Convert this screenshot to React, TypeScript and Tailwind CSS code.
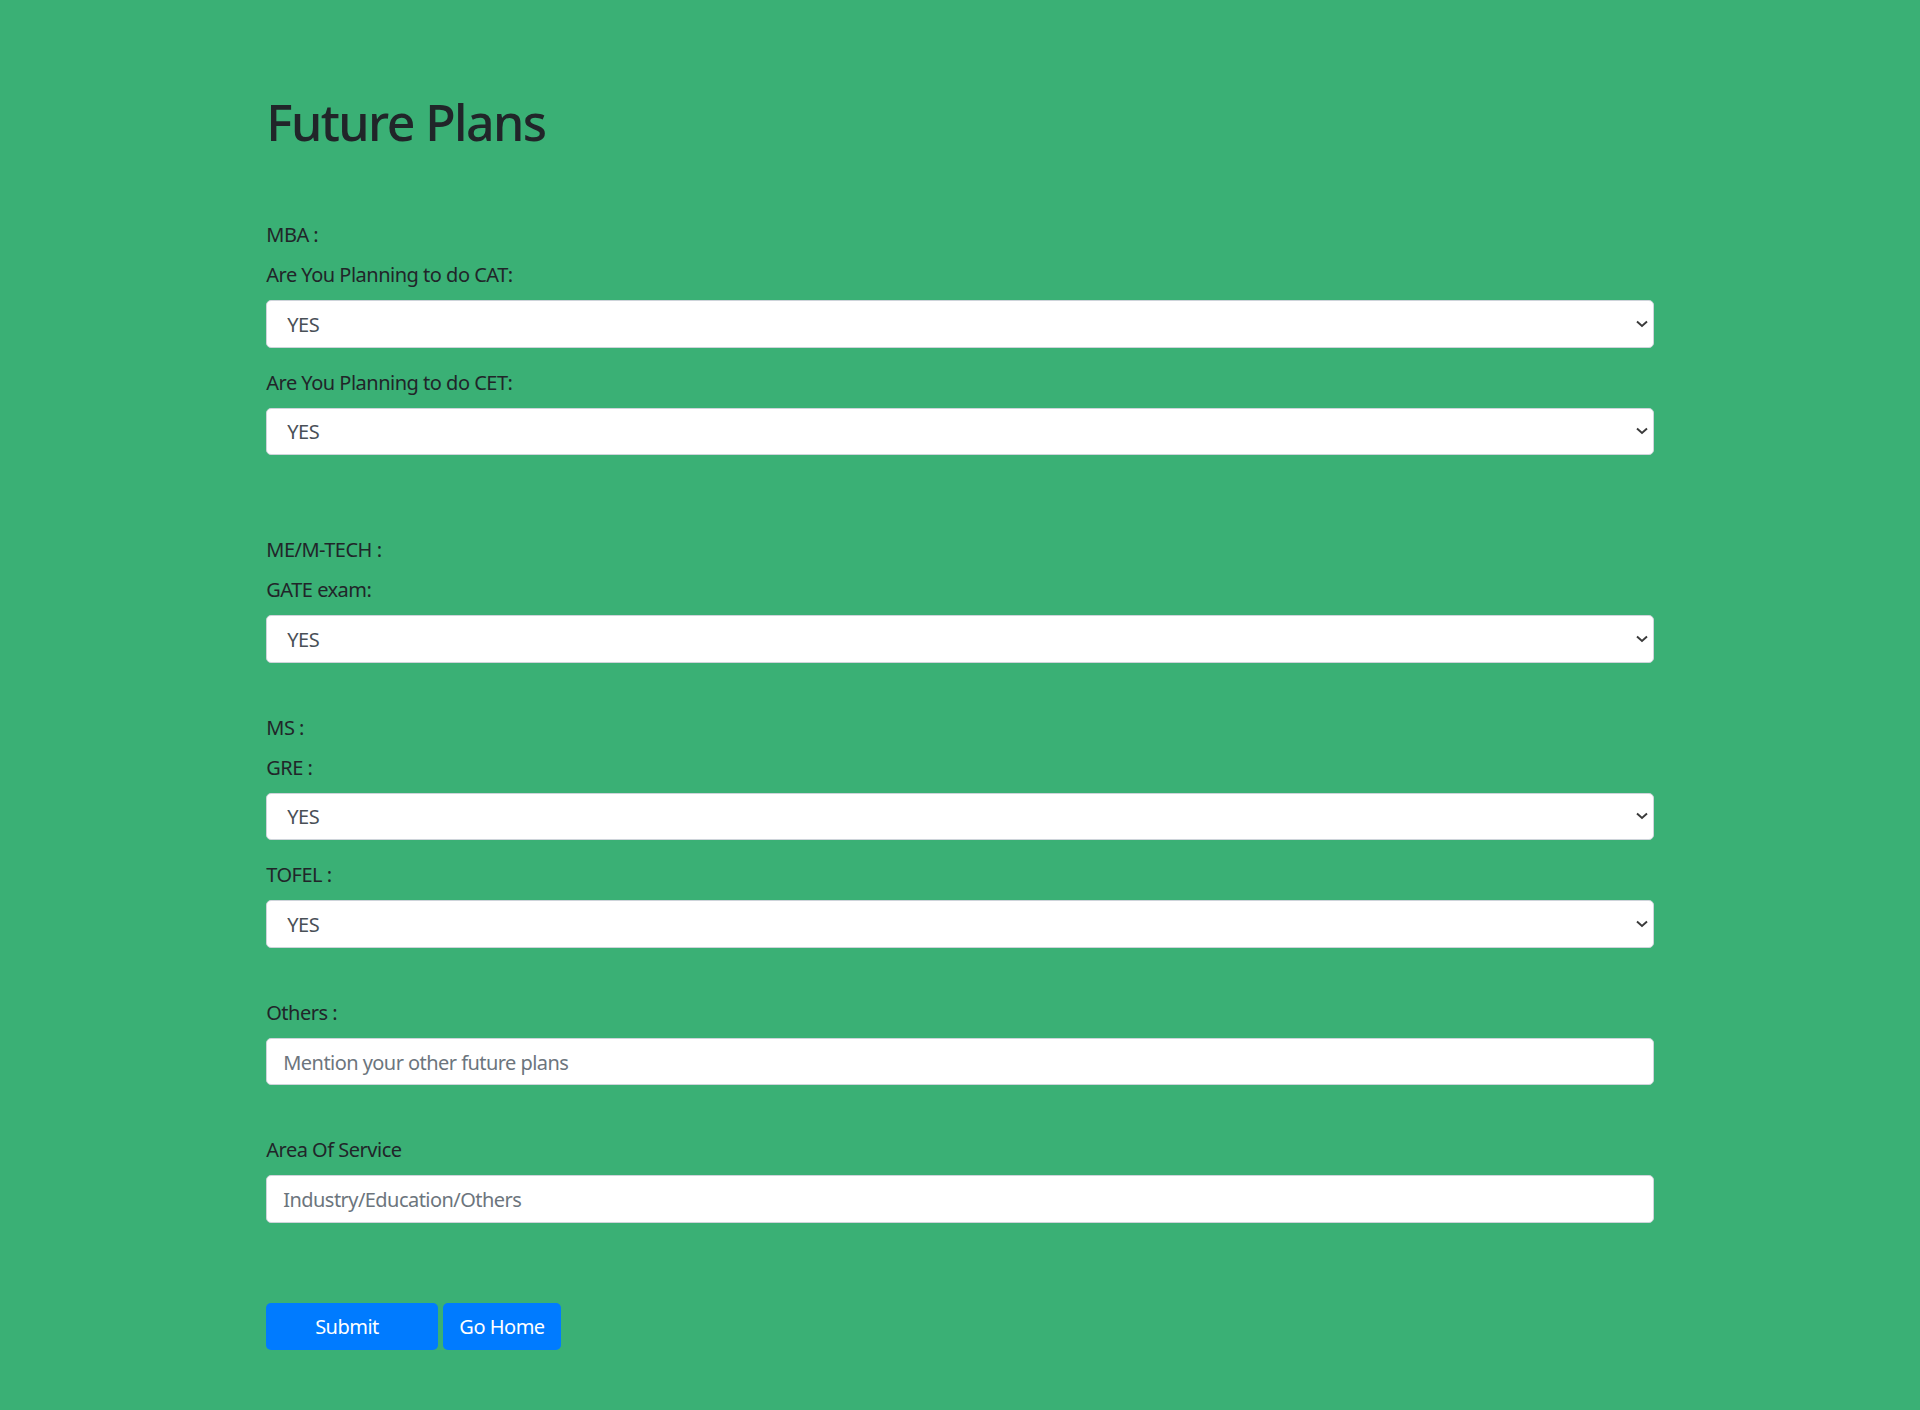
import React from "react";

const font = { fontFamily: '"Noto Sans", "Open Sans", Arial, sans-serif' };

function Label({ children, className = "" }: { children: React.ReactNode; className?: string }) {
  return (
    <label className={`block pt-[1px] text-[20px] leading-[30px] tracking-[-0.5px] text-[#212529] ${className}`}>
      {children}
    </label>
  );
}

function YesSelect({ className = "" }: { className?: string }) {
  return (
    <div className={`relative ${className}`}>
      <select
        defaultValue="YES"
        className="block h-[47.5px] w-full appearance-none rounded-[5px] border border-[#ced4da] bg-white pl-[20px] pt-[2px] text-[20px] leading-[30px] tracking-[-0.5px] text-[#495057] outline-none"
        style={font}
      >
        <option>YES</option>
        <option>NO</option>
      </select>
      {/* native-looking chevron */}
      <svg
        className="pointer-events-none absolute right-[6px] top-1/2 -translate-y-1/2"
        width="12"
        height="8"
        viewBox="0 0 12 8"
        fill="none"
      >
        <polyline points="1,1.5 6,6 11,1.5" stroke="#3a3a3a" strokeWidth="1.9" />
      </svg>
    </div>
  );
}

function TextField({ placeholder, className = "" }: { placeholder: string; className?: string }) {
  return (
    <input
      type="text"
      placeholder={placeholder}
      className={`block h-[47.5px] w-full rounded-[5px] border border-[#ced4da] bg-white pl-[16px] pt-[2px] text-[20px] leading-[30px] tracking-[-0.55px] text-[#495057] outline-none placeholder:text-[#6c757d] ${className}`}
      style={font}
    />
  );
}

export default function App() {
  return (
    <div className="min-h-screen bg-[#3ab075]" style={font}>
      <div className="mx-auto max-w-[1425px] px-[18.75px] pt-[92px] pb-[60px]">
        <h1 className="text-[50px] font-medium leading-[60px] tracking-[-1.6px] text-[#212529]">Future Plans</h1>

        <form className="mt-[67px]" onSubmit={(e) => e.preventDefault()}>
          {/* MBA */}
          <Label>MBA :</Label>
          <Label className="mt-[9px]">Are You Planning to do CAT:</Label>
          <YesSelect className="mt-[10px]" />
          <Label className="mt-[19px]">Are You Planning to do CET:</Label>
          <YesSelect className="mt-[10px]" />

          {/* ME / M-TECH */}
          <Label className="mt-[79px]">ME/M-TECH :</Label>
          <Label className="mt-[9px]">GATE exam:</Label>
          <YesSelect className="mt-[10px]" />

          {/* MS */}
          <Label className="mt-[49px]">MS :</Label>
          <Label className="mt-[9px]">GRE :</Label>
          <YesSelect className="mt-[10px]" />
          <Label className="mt-[19px]">TOFEL :</Label>
          <YesSelect className="mt-[10px]" />

          <Label className="mt-[49px]">Others :</Label>
          <TextField className="mt-[10px]" placeholder="Mention your other future plans" />

          <Label className="mt-[49px]">Area Of Service</Label>
          <TextField className="mt-[10px]" placeholder="Industry/Education/Others" />

          <div className="mt-[80px] flex gap-[5.5px]">
            <button
              type="submit"
              className="flex h-[47.5px] w-[171.5px] items-center justify-center rounded-[5px] bg-[#007bff] pr-[10px] pt-[1px] text-[20px] leading-[30px] tracking-[-0.5px] text-white"
            >
              Submit
            </button>
            <button
              type="button"
              className="flex h-[47.5px] w-[117.5px] items-center justify-center rounded-[5px] bg-[#007bff] pt-[1px] text-[20px] leading-[30px] tracking-[-0.5px] text-white"
            >
              Go Home
            </button>
          </div>
        </form>
      </div>
    </div>
  );
}
